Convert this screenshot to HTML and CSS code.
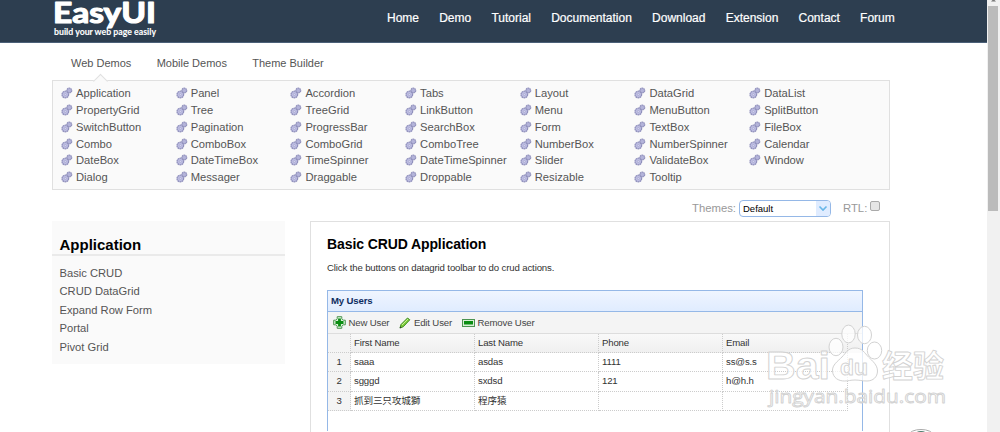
FILE: index.html
```html
<!DOCTYPE html>
<html lang="en">
<head>
    <meta charset="UTF-8">
    <title>EasyUI Demo</title>
    <link rel="stylesheet" href="styles.css">
</head>
<body>

<div class="page">
    <div class="header">
        <svg class="logo" width="110" height="42" viewBox="0 0 110 42">
            <text class="logo-name" x="2" y="22.5" textLength="103" lengthAdjust="spacingAndGlyphs">EasyUI</text>
            <text class="logo-slogan" x="3" y="35" textLength="102" lengthAdjust="spacingAndGlyphs">build your web page easily</text>
        </svg>
        <div class="nav">
            <a>Home</a><a>Demo</a><a>Tutorial</a><a>Documentation</a><a>Download</a><a>Extension</a><a>Contact</a><a>Forum</a>
        </div>
    </div>

    <div class="tabs">
        <a class="active">Web Demos</a><a>Mobile Demos</a><a>Theme Builder</a>
    </div>

    <div class="menu" id="menu"></div>

    <div class="themes">
        <span>Themes:</span>
        <div class="combo">
            <span class="combo-text">Default</span>
            <span class="combo-arrow"><svg width="14" height="15" viewBox="0 0 14 15"><path d="M3.5 5.5 L7 9 L10.5 5.5" fill="none" stroke="#68b6e8" stroke-width="1.6"/></svg></span>
        </div>
        <span class="rtl">RTL:</span>
        <span class="check"></span>
    </div>

    <div class="main">
        <div class="sidebar">
            <h2>Application</h2>
            <a>Basic CRUD</a>
            <a>CRUD DataGrid</a>
            <a>Expand Row Form</a>
            <a>Portal</a>
            <a>Pivot Grid</a>
        </div>

        <div class="content">
            <h2>Basic CRUD Application</h2>
            <p>Click the buttons on datagrid toolbar to do crud actions.</p>
            <div class="panel">
                <div class="panel-title">My Users</div>
                <div class="toolbar">
                    <span class="tool add">
                        <svg width="13" height="13" viewBox="0 0 13 13"><path d="M4.2.7h4.6v2l1.5 1.5h2v4.6h-2l-1.5 1.5v2H4.2v-2L2.7 8.8h-2V4.2h2l1.5-1.5z" fill="#d9efd7" stroke="#4c9350" stroke-width="1"/><path d="M5.1 2.5h2.8v2.6h2.6v2.8H7.9v2.6H5.1V7.9H2.5V5.1h2.6z" fill="#0b8d12"/></svg>
                        New User</span>
                    <span class="tool edit">
                        <svg width="12" height="12" viewBox="0 0 12 12"><path d="M1 11l1-3.5L8.5 1l2.3 1.8L4.3 9.7z" fill="#7ccc38" stroke="#3f8c25" stroke-width="1"/><path d="M3 8l6-6" stroke="#c8f090" stroke-width="1"/><path d="M.7 11.3l.5-1.8 1.2 1.2z" fill="#333"/></svg>
                        Edit User</span>
                    <span class="tool remove">
                        <svg width="13" height="8" viewBox="0 0 13 8"><rect x=".5" y=".5" width="12" height="7" fill="#d9efd7" stroke="#4c9350"/><rect x="2" y="2" width="9" height="3.5" fill="#0b8d12"/></svg>
                        Remove User</span>
                </div>
                <div class="grid">
                    <div class="row head"><span class="num"></span><span>First Name</span><span>Last Name</span><span>Phone</span><span>Email</span></div>
                    <div class="row"><span class="num">1</span><span>saaa</span><span>asdas</span><span>1111</span><span>ss@s.s</span></div>
                    <div class="row"><span class="num">2</span><span>sgggd</span><span>sxdsd</span><span>121</span><span>h@h.h</span></div>
                    <div class="row cjk"><span class="num">3</span><span>抓到三只攻城獅</span><span>程序猿</span><span></span><span></span></div>
                </div>
            </div>
        </div>
    </div>
</div>

<div class="scrollbar">
    <svg width="13" height="6" viewBox="0 0 13 6"><path d="M4 1.5L6.5 -1L9 1.5z" fill="#777"/></svg>
    <div class="thumb"></div>
</div>

<!-- watermark over the page -->
<svg class="watermark" width="200" height="112" viewBox="760 320 200 112">
    <g fill="#fff" fill-opacity=".75" stroke="#d2d2d2" stroke-width="1">
        <text class="mark-big" x="766" y="379" textLength="64" lengthAdjust="spacingAndGlyphs">Bai</text>
        <text class="mark-cjk" x="882" y="377" textLength="62" lengthAdjust="spacingAndGlyphs">经验</text>
        <ellipse cx="836" cy="347" rx="7" ry="8.7"/>
        <ellipse cx="848.5" cy="334" rx="6.7" ry="8.9"/>
        <ellipse cx="864.5" cy="335" rx="7" ry="8.7"/>
        <ellipse cx="874.5" cy="350.5" rx="7.2" ry="8.5"/>
        <path d="M855 348c-7 0-9 5-13 9c-4 4-10 8-9.500 14c.5 7 6 10 12 10c4 0 6-1 10.500-1s7 1 12 1c6 0 10.500-4 10.500-10c0-6-5-10-9-14c-4-4-6-9-13.500-9z"/>
        <text class="mark-du" x="840" y="375" textLength="28" lengthAdjust="spacingAndGlyphs">du</text>
        <text class="mark-url" x="769" y="403" textLength="177" lengthAdjust="spacingAndGlyphs">jingyan.baidu.com</text>
    </g>
    <ellipse cx="921" cy="435" rx="12" ry="5.500" fill="#fff" stroke="#aaa"/>
    <ellipse cx="921" cy="434" rx="6" ry="3" fill="#4b7b6d"/>
</svg>

<script>
// menu items, row by row
var items = [
    "Application", "Panel", "Accordion", "Tabs", "Layout", "DataGrid", "DataList",
    "PropertyGrid", "Tree", "TreeGrid", "LinkButton", "Menu", "MenuButton", "SplitButton",
    "SwitchButton", "Pagination", "ProgressBar", "SearchBox", "Form", "TextBox", "FileBox",
    "Combo", "ComboBox", "ComboGrid", "ComboTree", "NumberBox", "NumberSpinner", "Calendar",
    "DateBox", "DateTimeBox", "TimeSpinner", "DateTimeSpinner", "Slider", "ValidateBox", "Window",
    "Dialog", "Messager", "Draggable", "Droppable", "Resizable", "Tooltip"
];
var gear = '<svg width="12" height="12" viewBox="0 0 12 12">' +
    '<circle cx="8.300" cy="3.500" r="2.400" fill="#b4b4da" stroke="#9292bd" stroke-width="1.300" stroke-dasharray="1.500 .4"/>' +
    '<circle cx="4.300" cy="7.500" r="3.300" fill="#bdbde2" stroke="#9090bc" stroke-width="1.300" stroke-dasharray="1.700 .4"/>' +
    '<circle cx="4.300" cy="7.500" r="1" fill="#dcdcf2" stroke="#a0a0ca" stroke-width=".6"/></svg>';
document.getElementById("menu").innerHTML = items.map(function(name) {
    return '<a>' + gear + name + '</a>';
}).join("");
</script>

</body>
</html>
```
FILE: styles.css
```css
* {
    box-sizing: border-box;
}
body {
    margin: 0;
    height: 432px;
    overflow: hidden;
    display: flex;
    background: #fff;
    font-family: "Liberation Sans", Arial, sans-serif;
    font-size: 11.2px;
    color: #555;
}
svg {
    flex: none;
}
.page {
    width: 987px;
}
.header {
    height: 43px;
    padding-left: 51px;
    display: flex;
    background: #2d3e50;
    border-bottom: 1px solid #4b6078;
}
.logo text {
    fill: #fff;
    stroke: #fff;
    stroke-linejoin: round;
}
.logo .logo-name {
    font: bold 29px Lato, sans-serif;
    stroke-width: 1.2px;
}
.logo .logo-slogan {
    font: bold 9px Lato, sans-serif;
    stroke-width: 0.1px;
}
.nav {
    display: flex;
    gap: 20.2px;
    margin-left: 226px;
    line-height: 36px;
    font-size: 12px;
    color: #fff;
    -webkit-text-stroke: 0.2px #fff;
}
.tabs {
    height: 37px;
    padding-left: 71px;
    display: flex;
    gap: 25.3px;
    font-size: 11px;
    line-height: 41px;
}
.tabs .active {
    position: relative;
}
.tabs .active::after {
    content: "";
    position: absolute;
    left: 24px;
    top: 33px;
    width: 9px;
    height: 9px;
    background: #fafafa;
    border: 1px solid #e0e0e0;
    border-right-color: transparent;
    border-bottom-color: transparent;
    transform: rotate(45deg);
}
.menu {
    width: 838px;
    height: 110px;
    margin-left: 52px;
    padding: 3.6px 0 0 8px;
    display: grid;
    grid-template-columns: repeat(7, 114.7px);
    grid-auto-rows: 16.85px;
    background: #fafafa;
    border: 1px solid #e0e0e0;
}
.menu a {
    display: flex;
    align-items: center;
    gap: 3px;
}
.themes {
    height: 31px;
    padding-top: 10px;
    display: flex;
    color: #999;
    line-height: 16px;
    padding-left: 692px;
    font-size: 11.3px;
}
.themes > span:first-child {
    width: 43px;
}
.combo {
    width: 92px;
    height: 17px;
    margin-left: 4px;
    display: flex;
    border: 1px solid #95b8e7;
    border-radius: 4px;
    overflow: hidden;
    background: #fff;
}
.combo-text {
    flex: 1;
    padding-left: 3px;
    font-size: 9.5px;
    color: #000;
}
.combo-arrow {
    width: 14px;
    background: #e0ecff;
}
.rtl {
    margin-left: 12px;
}
.check {
    width: 10px;
    height: 10px;
    margin: 1px 0 0 3px;
    border: 1px solid #aaa;
    border-radius: 2px;
    background: #e6e6e6;
}
.main {
    display: flex;
    align-items: flex-start;
    padding-left: 52px;
    gap: 25px;
}
.sidebar {
    width: 233px;
    height: 143px;
    background: #fafafa;
}
.sidebar h2 {
    margin: 0 0 8px;
    height: 35px;
    padding: 15px 7.5px 0;
    font-size: 15px;
    line-height: 17px;
    color: #000;
    border-bottom: 2px solid #eaeaea;
}
.sidebar a {
    display: block;
    padding-left: 7.5px;
    line-height: 18.4px;
}
.content {
    width: 580px;
    height: 211px;
    padding: 0 16px;
    border: 1px solid #e0e0e0;
    border-bottom: 0;
}
.content h2 {
    margin: 14px 0 0;
    font-size: 14px;
    letter-spacing: -0.1px;
    line-height: 16px;
    color: #000;
}
.content p {
    margin: 9px 0 15px;
    font-size: 9.6px;
    letter-spacing: -0.13px;
    line-height: 14px;
    color: #333;
}
.panel {
    width: 536px;
    height: 141px;
    border: 1px solid #95b8e7;
    border-bottom: 0;
    font-size: 9.6px;
    letter-spacing: -0.15px;
}
.panel-title {
    height: 21px;
    padding-left: 3px;
    line-height: 20px;
    font-weight: bold;
    color: #0e2d5f;
    background: linear-gradient(#eff5ff, #e0ecff);
    border-bottom: 1px solid #95b8e7;
}
.toolbar {
    height: 22px;
    display: flex;
    align-items: center;
    padding-left: 5px;
    gap: 10px;
    background: #f4f4f4;
    border-bottom: 1px solid #ddd;
    color: #444;
}
.tool {
    display: flex;
    align-items: center;
    gap: 2.5px;
}
.row {
    display: grid;
    grid-template-columns: 23px 124px 124px 124px 125px;
    height: 19.2px;
    line-height: 18px;
    color: #333;
}
.row span {
    padding-left: 3px;
    border-right: 1px dotted #ccc;
    border-bottom: 1px dotted #ccc;
}
.row .num {
    padding: 0;
    text-align: center;
    background: #f4f4f4;
}
.head {
    width: 534px;
    background: linear-gradient(#f9f9f9, #efefef);
}
.cjk {
    font-family: "Liberation Sans", "Noto Sans CJK SC", sans-serif;
}
.scrollbar {
    width: 13px;
    background: #f1f1f1;
}
.scrollbar svg {
    display: block;
}
.thumb {
    width: 10px;
    height: 205px;
    margin-left: 1px;
    background: #bbb;
}
.watermark {
    position: absolute;
    left: 760px;
    top: 320px;
}
.watermark text {
    stroke-linejoin: round;
    stroke-width: 0.9px;
}
.mark-big {
    font: bold 38px "Liberation Sans", sans-serif;
}
.mark-cjk {
    font: bold 31px "Noto Sans CJK SC", sans-serif;
}
.mark-du {
    font: bold 22px "Liberation Sans", sans-serif;
}
.mark-url {
    font: 19px "Open Sans", sans-serif;
}
```
